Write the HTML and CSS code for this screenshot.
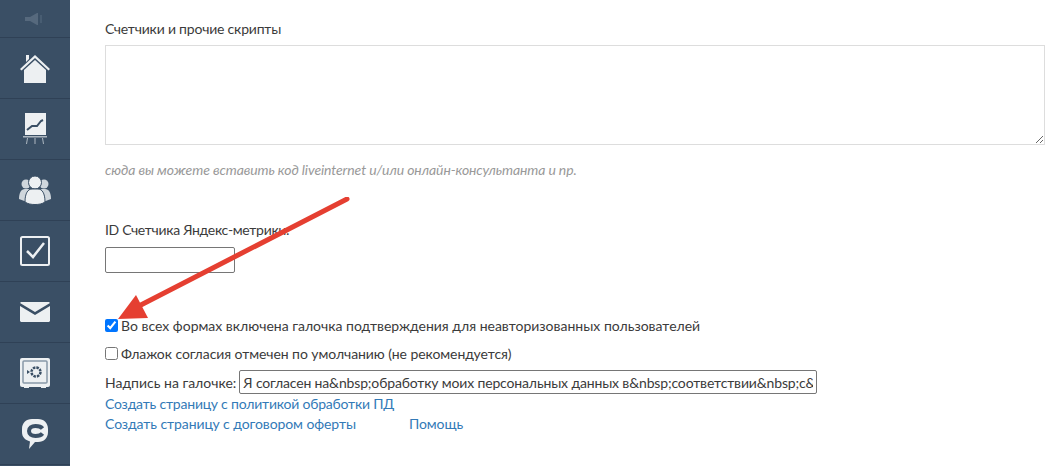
FILE: index.html
```html
<!DOCTYPE html>
<html lang="ru">
<head>
<meta charset="utf-8">
<title>Настройки</title>
<link rel="stylesheet" href="styles.css">
</head>
<body>
<nav class="sidebar">
  <div class="nav-top">
    <svg width="20" height="14" viewBox="0 0 20 14"><path d="M0 5h5l7-4h1v12h-1L5 9H0z" fill="#56697d"/><path d="M15 3h2v8h-2z" fill="#485d72"/></svg>
  </div>
  <div class="nav-item">
    <svg width="32" height="31" viewBox="0 0 32 31"><path d="M7 2h3v4L7 9z" fill="#edf0f2"/><path d="M1 16 16 2l15 14-1.500 1.500L16 5 2.500 17.500z" fill="#edf0f2"/><path d="M5 17 16 7l11 10v13H5z" fill="#edf0f2"/></svg>
  </div>
  <div class="nav-item">
    <svg width="24" height="32" viewBox="0 0 24 32"><path d="M2 0h21v22H2z" fill="#edf0f2"/><path d="M4 17l5-4 5 0 4-5 2-1" fill="none" stroke="#3a4f65" stroke-width="2"/><path d="M0 23h24v1.500H0zM4 25h1l-1 6H3zM11.500 25h1v6h-1zM19 25h1l1 6h-1z" fill="#aeb8c1"/></svg>
  </div>
  <div class="nav-item">
    <svg width="34" height="30" viewBox="0 0 34 30"><circle cx="8" cy="9" r="4.500" fill="#cfd6dc"/><circle cx="26" cy="9" r="4.500" fill="#cfd6dc"/><path d="M1 24c0-6 2-10 6-10h4l-2 13zM33 24c0-6-2-10-6-10h-4l2 13z" fill="#cfd6dc"/><circle cx="17" cy="7.500" r="6.500" fill="#edf0f2" stroke="#3a4f65"/><path d="M7 27c0-9 3-13 7-13h6c4 0 7 4 7 13-3 2-6 2.500-10 2.500S10 29 7 27z" fill="#edf0f2" stroke="#3a4f65"/></svg>
  </div>
  <div class="nav-item">
    <svg width="30" height="30" viewBox="0 0 30 30"><rect x="1" y="1" width="28" height="28" rx="1.500" fill="none" stroke="#edf0f2" stroke-width="2"/><path d="M7 15l6 6L24 7" fill="none" stroke="#edf0f2" stroke-width="2.500"/></svg>
  </div>
  <div class="nav-item">
    <svg width="30" height="20" viewBox="0 0 30 20"><path d="M1 0h28l1 1-15 9L0 1zM0 4l15 9 15-9v15l-1 1H1l-1-1z" fill="#edf0f2"/></svg>
  </div>
  <div class="nav-item">
    <svg width="30" height="30" viewBox="0 0 30 30"><rect width="30" height="29" rx="2" fill="#edf0f2"/><rect x="3" y="3" width="24" height="22" rx="1" fill="none" stroke="#8898a8" stroke-width="1.500"/><circle cx="16" cy="14" r="4.500" fill="none" stroke="#3a4f65" stroke-width="2.500" stroke-dasharray="2.500 1"/><path d="M7 12l3 2-3 2z" fill="#3a4f65"/><path d="M4 29h5v1H4zM21 29h5v1h-5z" fill="#edf0f2"/></svg>
  </div>
  <div class="nav-item">
    <svg width="26" height="30" viewBox="0 0 26 30"><path d="M10 0h6c6 0 10 4 10 10v3c0 6-4 10-10 10h-3l-6 7 1-7.500C3 21 0 18 0 13v-3C0 4 4 0 10 0z" fill="#edf0f2"/><path d="M20.500 9.500C19 7.500 16.500 7 13.500 7 9.500 7 7 9 7 12s2.500 5 6.500 5c3 0 5.500-.5 7-2.500" fill="none" stroke="#3a4f65" stroke-width="4"/></svg>
  </div>
</nav>

<main class="content">
  <label class="field-label scripts-label" for="scripts">Счетчики и прочие скрипты</label>
  <textarea id="scripts" class="code-area"></textarea>
  <p class="hint">сюда вы можете вставить код liveinternet и/или онлайн-консультанта и пр.</p>

  <label class="field-label metrika-label" for="metrika">ID Счетчика Яндекс-метрики:</label>
  <input id="metrika" class="metrika-input" type="text">

  <label class="check-row first-check"><input type="checkbox" checked>Во всех формах включена галочка подтверждения для неавторизованных пользователей</label>
  <label class="check-row second-check"><input type="checkbox">Флажок согласия отмечен по умолчанию (не рекомендуется)</label>

  <div class="caption-row">
    <span>Надпись на галочке:</span>
    <input class="caption-input" type="text" value="Я согласен на&amp;nbsp;обработку моих персональных данных в&amp;nbsp;соответствии&amp;nbsp;с&amp;nbsp;Политикой">
  </div>
  <div class="link-row policy"><a href="#">Создать страницу с политикой обработки ПД</a></div>
  <div class="link-row spaced"><a href="#">Создать страницу с договором оферты</a><a href="#">Помощь</a></div>
</main>

<svg class="arrow" width="260" height="140" viewBox="0 0 260 140">
  <path d="M242 2 30 111" stroke="#e53f31" stroke-width="5" stroke-linecap="round" fill="none"/>
  <path d="M13 122 31 98 43 121z" fill="#e53f31"/>
</svg>
</body>
</html>
```
FILE: styles.css
```css
* { box-sizing: border-box; }
html, body { margin: 0; height: 466px; overflow: hidden; }
body {
  display: flex;
  position: relative;
  background: #fff;
  font-family: Lato, "Open Sans", sans-serif;
  font-size: 14px;
  color: #3b3b3b;
}
.sidebar {
  width: 70px;
  flex: none;
  height: 466px;
  background: #3a4f65;
  overflow: hidden;
}
.nav-top {
  height: 38px;
  border-bottom: 1px solid #2f4156;
  display: flex;
  align-items: center;
  justify-content: center;
}
.nav-item {
  height: 61px;
  border-bottom: 1px solid #2f4156;
  display: flex;
  align-items: center;
  justify-content: center;
}
.content {
  flex: 1;
  padding: 20px 11px 0 35px;
  min-width: 0;
}
.field-label { display: block; line-height: 17px; }
.scripts-label { letter-spacing: -0.2px; }
.code-area {
  display: block;
  width: 940px;
  height: 100px;
  margin: 8px 0 0;
  border: 1px solid #ddd;
  background: #fff;
  padding: 4px;
}
.hint {
  margin: 16px 0 0;
  font-style: italic;
  color: #999;
  line-height: 17px;
  letter-spacing: -0.11px;
}
.metrika-label { margin-top: 43px; letter-spacing: -0.3px; }
.metrika-input {
  display: block;
  width: 130px;
  height: 26px;
  margin: 9px 0 0;
  border: 1px solid #767676;
  border-radius: 2px;
  padding: 1px 2px;
}
.check-row {
  display: flex;
  align-items: center;
  line-height: 17px;
}
.check-row input { width: 13px; height: 13px; margin: 0 3px 0 0; flex: none; }
.first-check { margin-top: 44px; }
.second-check { margin-top: 11px; letter-spacing: -0.07px; }
.caption-row {
  display: flex;
  align-items: center;
  gap: 3px;
  margin-top: 8px;
}
.caption-input {
  width: 578px;
  height: 24px;
  border: 1px solid #767676;
  border-radius: 2px;
  padding: 1px 3px;
  font: inherit;
  color: inherit;
  letter-spacing: -0.15px;
}
.link-row { line-height: 17px; margin-top: 1px; }
.policy { letter-spacing: -0.2px; }
.link-row.spaced { margin-top: 3px; display: flex; gap: 53px; letter-spacing: -0.08px; }
a { color: #337ab7; text-decoration: none; }
.arrow { position: absolute; left: 105px; top: 197px; }
```
